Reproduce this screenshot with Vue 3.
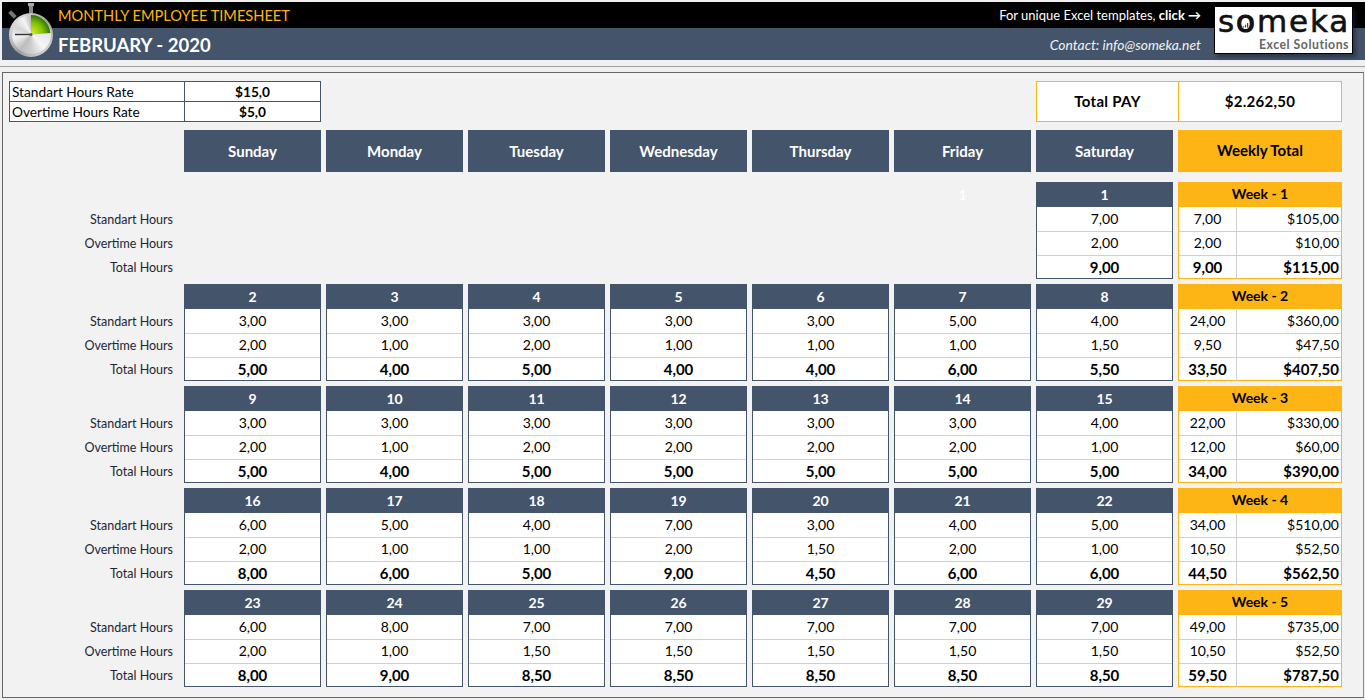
<template>
  <div class="sheet">
    <header class="top">
      <div class="watch" aria-hidden="true">
        <div class="watch-rim">
          <div class="watch-dial"></div>
        </div>
        <svg width="50" height="60" viewBox="0 0 50 60">
          <defs>
            <radialGradient id="wedge" cx="0.05" cy="0.95" r="1.05">
              <stop offset="0" stop-color="#d5ee2a" />
              <stop offset="0.55" stop-color="#7fc000" />
              <stop offset="1" stop-color="#1c5c05" />
            </radialGradient>
          </defs>
          <rect x="22" y="4" width="4" height="9" fill="#8c8c8c" />
          <rect x="21" y="3" width="6" height="3" fill="#a8a8a8" />
          <rect x="3.5" y="10.5" width="4" height="8" fill="#777" transform="rotate(-45 5.5 14.5)" />
          <path d="M24 34.5 L24 15 A19.5 19.5 0 0 1 43.4 33 Z" fill="url(#wedge)" />
          <path d="M8 34.5 H24" stroke="#333" stroke-width="1.4" />
          <circle cx="24" cy="34.5" r="1.5" fill="#555" />
        </svg>
      </div>

      <div class="top-band black">
        <span class="app-title">MONTHLY EMPLOYEE TIMESHEET</span>
        <span class="promo">For unique Excel templates, <b>click →</b></span>
      </div>
      <div class="top-band slate">
        <span class="month">FEBRUARY - 2020</span>
        <span class="contact">Contact: info@someka.net</span>
      </div>

      <div class="logo">
        <div class="logo-word">s<span class="logo-o">o<svg width="7" height="6" viewBox="0 0 11 10" aria-hidden="true"><path d="M1 9V7h2v2zM4.5 9V4.5h2V9zM8 9V1.5h2V9z" fill="#444" /></svg></span>meka</div>
        <div class="logo-sub">Excel Solutions</div>
      </div>
    </header>

    <div class="rule"></div>

    <main class="panel">
      <section class="row summary">
        <table class="rates">
          <tbody>
            <tr v-for="rate in rates" :key="rate.label">
              <td>{{ rate.label }}</td>
              <td class="rate-value">{{ rate.value }}</td>
            </tr>
          </tbody>
        </table>
        <div class="total-pay">
          <div>Total PAY</div>
          <div>$2.262,50</div>
        </div>
      </section>

      <section class="row day-heads">
        <div v-for="day in days" :key="day" class="day-head">{{ day }}</div>
        <div class="day-head weekly">Weekly Total</div>
      </section>

      <section class="weeks">
        <div v-for="(week, w) in weeks" :key="w" class="row">
          <div class="labels">
            <span>Standart Hours</span>
            <span>Overtime Hours</span>
            <span>Total Hours</span>
          </div>

          <template v-for="(cell, i) in week.cells" :key="i">
            <div v-if="cell" class="card">
              <div class="card-head">{{ cell[0] }}</div>
              <div class="line">{{ cell[1] }}</div>
              <div class="line">{{ cell[2] }}</div>
              <div class="line strong">{{ cell[3] }}</div>
            </div>
            <div v-else class="blank">{{ i === 5 ? '1' : '' }}</div>
          </template>

          <div class="card gold">
            <div class="card-head">Week - {{ w + 1 }}</div>
            <div v-for="(t, r) in week.totals" :key="r" class="gold-line" :class="{ strong: r === 2 }">
              <span>{{ t[0] }}</span>
              <span>{{ t[1] }}</span>
            </div>
          </div>
        </div>
      </section>
    </main>
  </div>
</template>

<script setup>
const rates = [
  { label: 'Standart Hours Rate', value: '$15,0' },
  { label: 'Overtime Hours Rate', value: '$5,0' },
]

const days = ['Sunday', 'Monday', 'Tuesday', 'Wednesday', 'Thursday', 'Friday', 'Saturday']

const weeks = [
  {
    cells: [null, null, null, null, null, null, [1, '7,00', '2,00', '9,00']],
    totals: [['7,00', '$105,00'], ['2,00', '$10,00'], ['9,00', '$115,00']],
  },
  {
    cells: [
      [2, '3,00', '2,00', '5,00'],
      [3, '3,00', '1,00', '4,00'],
      [4, '3,00', '2,00', '5,00'],
      [5, '3,00', '1,00', '4,00'],
      [6, '3,00', '1,00', '4,00'],
      [7, '5,00', '1,00', '6,00'],
      [8, '4,00', '1,50', '5,50'],
    ],
    totals: [['24,00', '$360,00'], ['9,50', '$47,50'], ['33,50', '$407,50']],
  },
  {
    cells: [
      [9, '3,00', '2,00', '5,00'],
      [10, '3,00', '1,00', '4,00'],
      [11, '3,00', '2,00', '5,00'],
      [12, '3,00', '2,00', '5,00'],
      [13, '3,00', '2,00', '5,00'],
      [14, '3,00', '2,00', '5,00'],
      [15, '4,00', '1,00', '5,00'],
    ],
    totals: [['22,00', '$330,00'], ['12,00', '$60,00'], ['34,00', '$390,00']],
  },
  {
    cells: [
      [16, '6,00', '2,00', '8,00'],
      [17, '5,00', '1,00', '6,00'],
      [18, '4,00', '1,00', '5,00'],
      [19, '7,00', '2,00', '9,00'],
      [20, '3,00', '1,50', '4,50'],
      [21, '4,00', '2,00', '6,00'],
      [22, '5,00', '1,00', '6,00'],
    ],
    totals: [['34,00', '$510,00'], ['10,50', '$52,50'], ['44,50', '$562,50']],
  },
  {
    cells: [
      [23, '6,00', '2,00', '8,00'],
      [24, '8,00', '1,00', '9,00'],
      [25, '7,00', '1,50', '8,50'],
      [26, '7,00', '1,50', '8,50'],
      [27, '7,00', '1,50', '8,50'],
      [28, '7,00', '1,50', '8,50'],
      [29, '7,00', '1,50', '8,50'],
    ],
    totals: [['49,00', '$735,00'], ['10,50', '$52,50'], ['59,50', '$787,50']],
  },
]
</script>

<style scoped>
.sheet {
  width: 1365px;
  height: 700px;
  padding-top: 2px;
  box-sizing: border-box;
  overflow: hidden;
  background: #f0f0f0;
  color: #000;
  font-family: Lato, "Liberation Sans", sans-serif;
  font-size: 14px;
}

.top {
  position: relative;
  margin-left: 2px;
}

.watch {
  position: absolute;
  left: 5px;
  top: -2px;
  z-index: 1;
  width: 50px;
  height: 60px;
}

.watch svg {
  position: absolute;
  left: 0;
  top: 0;
}

.watch-rim {
  position: absolute;
  left: 2px;
  top: 12.5px;
  width: 44px;
  height: 44px;
  box-sizing: border-box;
  padding: 2.5px;
  border-radius: 50%;
  background: linear-gradient(135deg, #f4f4f4, #9c9c9c 55%, #ececec);
}

.watch-dial {
  width: 100%;
  height: 100%;
  border-radius: 50%;
  background: conic-gradient(#b8b8b8, #e8e8e8 25%, #f6f6f6 38%, #cfcfcf 50%, #bdbdbd 60%, #f0f0f0 72%, #d4d4d4 82%, #f5f5f5 92%, #b8b8b8);
}

.top-band {
  display: flex;
  align-items: center;
  justify-content: space-between;
  padding: 0 164px 0 56px;
}

.black {
  height: 26px;
  background: #000;
}

.slate {
  height: 32px;
  background: #44546a;
}

.app-title {
  color: #fdb515;
  font-size: 14.6px;
}

.promo {
  color: #fff;
  font-size: 13px;
}

.month {
  padding-top: 2px;
  color: #fff;
  font-size: 18.5px;
  font-weight: 700;
}

.contact {
  color: #f2f2f2;
  font-size: 13.9px;
  font-style: italic;
}

.logo {
  position: absolute;
  top: 4px;
  right: 12px;
  z-index: 1;
  display: flex;
  flex-direction: column;
  width: 139px;
  height: 48px;
  box-sizing: border-box;
  border: 1px solid #000;
  background: #fff;
  box-shadow: 3px 3px 4px rgba(20, 30, 50, 0.55);
}

.logo-word {
  height: 32px;
  margin-top: -2px;
  padding-left: 3px;
  color: #111;
  font-family: "DejaVu Sans", sans-serif;
  font-size: 31px;
  line-height: 32px;
  letter-spacing: 1.9px;
  -webkit-text-stroke: 0.6px #111;
}

.logo-o {
  position: relative;
  -webkit-text-stroke: 1.2px #111;
}

.logo-o svg {
  position: absolute;
  left: 6px;
  top: 19px;
}

.logo-sub {
  height: 14px;
  margin-top: 1px;
  padding-right: 3px;
  color: #666;
  font-size: 12.3px;
  font-weight: 700;
  line-height: 14px;
  letter-spacing: 0.5px;
  text-align: right;
}

.rule {
  height: 1px;
  margin-top: 6px;
  background: #a0a0a0;
}

.panel {
  width: 1362px;
  height: 626px;
  margin: 5px 0 0 2px;
  box-sizing: border-box;
  border: 1px solid #666;
  border-right-color: #888;
  background: #f2f2f2;
  padding-top: 8px;
}

.row {
  display: grid;
  grid-template-columns: 176px repeat(7, 137px) 164px;
  column-gap: 5px;
}

.summary {
  display: flex;
  justify-content: space-between;
  width: 1339px;
  height: 41px;
}

.rates {
  width: 312px;
  height: 41px;
  margin-left: 6px;
  border-collapse: collapse;
  background: #fff;
  table-layout: fixed;
}

.rates td {
  height: 19px;
  padding: 0 2px;
  border: 1px solid #44546a;
  font-size: 13.7px;
  line-height: 18px;
}

.rates td:first-child {
  width: 170px;
}

.rate-value {
  font-weight: 700;
  text-align: center;
}

.total-pay {
  display: grid;
  grid-template-columns: 141px 163px;
  border: 1px solid #fdb515;
  box-sizing: border-box;
  background: #fff;
  font-size: 15px;
  font-weight: 700;
  letter-spacing: 0.3px;
}

.total-pay div {
  display: flex;
  align-items: center;
  justify-content: center;
  padding-bottom: 2px;
}

.total-pay div + div {
  border-left: 1px solid #fdb515;
}

.day-heads {
  margin-top: 8px;
}

.day-head {
  display: flex;
  align-items: center;
  justify-content: center;
  height: 42px;
  background: #44546a;
  color: #fff;
  font-size: 15px;
  font-weight: 700;
}

.day-head:first-child {
  grid-column: 2;
}

.weekly {
  box-sizing: border-box;
  padding-bottom: 2px;
  background: #fdb515;
  color: #000;
}

.weeks {
  display: flex;
  flex-direction: column;
  gap: 5px;
  margin-top: 10px;
}

.labels {
  display: flex;
  flex-direction: column;
  padding-top: 25px;
  padding-right: 6px;
  color: #1c2635;
  font-size: 12.5px;
  text-align: right;
}

.labels span {
  height: 24px;
  line-height: 25px;
}

.blank {
  padding-top: 5px;
  color: #fff;
  font-size: 13px;
  font-weight: 700;
  text-align: center;
}

.card {
  height: 97px;
  box-sizing: border-box;
  border: 1px solid #44546a;
  background: #fff;
}

.card-head {
  height: 24px;
  margin-top: -1px;
  margin-bottom: 1px;
  padding-top: 1px;
  background: #44546a;
  color: #fff;
  font-size: 14px;
  font-weight: 700;
  line-height: 24px;
  text-align: center;
}

.line {
  height: 24px;
  box-sizing: border-box;
  border-bottom: 1px solid #d0d0d0;
  font-size: 14px;
  line-height: 22px;
  text-align: center;
}

.line:last-child,
.gold-line:last-child {
  height: 23px;
  border-bottom: 0;
}

.line.strong,
.gold-line.strong {
  font-size: 15px;
  font-weight: 700;
  line-height: 23px;
}

.gold {
  border-color: #fdb515;
}

.gold .card-head {
  background: #fdb515;
  color: #000;
  line-height: 22px;
}

.gold-line {
  display: grid;
  grid-template-columns: 58px 1fr;
  height: 24px;
  box-sizing: border-box;
  border-bottom: 1px solid #d0d0d0;
  font-size: 14px;
  line-height: 22px;
}

.gold-line span:first-child {
  border-right: 1px solid #d0d0d0;
  text-align: center;
}

.gold-line span:last-child {
  padding-right: 2px;
  text-align: right;
}
</style>

<style>
html,
body {
  background: #f0f0f0;
}
</style>
